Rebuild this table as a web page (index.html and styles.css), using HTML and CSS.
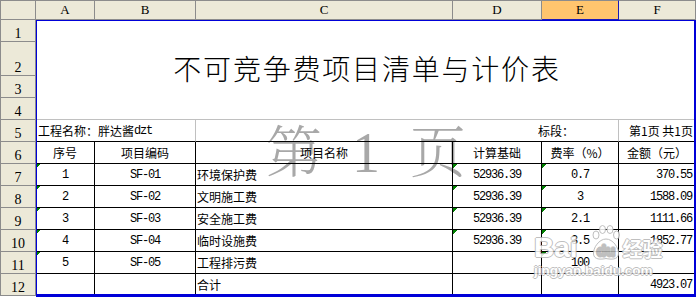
FILE: index.html
```html
<!DOCTYPE html>
<html lang="zh-CN">
<head>
<meta charset="utf-8">
<title>不可竞争费项目清单与计价表</title>
<link rel="stylesheet" href="styles.css">
</head>
<body>
<div class="sheet">
  <div class="corner"></div>
  <div class="ch">A</div>
  <div class="ch">B</div>
  <div class="ch">C</div>
  <div class="ch">D</div>
  <div class="ch ch-active">E</div>
  <div class="ch">F</div>

  <div class="title">不可竞争费项目清单与计价表</div>
  <div class="rh">1</div>
  <div class="rh">2</div>
  <div class="rh">3</div>
  <div class="rh">4</div>

  <div class="rh">5</div>
  <div class="c info span2 sep-r pad-a">工程名称：胖达酱<span class="num">dzt</span></div>
  <div class="c info"></div>
  <div class="c info span2 sep-r label">标段：</div>
  <div class="c info right">第1页 共1页</div>

  <div class="rh">6</div>
  <div class="c g center">序号</div>
  <div class="c g center">项目编码</div>
  <div class="c g center">项目名称</div>
  <div class="c g center">计算基础</div>
  <div class="c g center">费率（%）</div>
  <div class="c g center">金额（元）</div>

  <div class="rh">7</div>
  <div class="c g center tri"><span class="num">1</span></div>
  <div class="c g center"><span class="num">SF-01</span></div>
  <div class="c g">环境保护费</div>
  <div class="c g center tri"><span class="num">52936.39</span></div>
  <div class="c g center tri"><span class="num">0.7</span></div>
  <div class="c g right"><span class="num">370.55</span></div>

  <div class="rh">8</div>
  <div class="c g center tri"><span class="num">2</span></div>
  <div class="c g center"><span class="num">SF-02</span></div>
  <div class="c g">文明施工费</div>
  <div class="c g center tri"><span class="num">52936.39</span></div>
  <div class="c g center tri"><span class="num">3</span></div>
  <div class="c g right"><span class="num">1588.09</span></div>

  <div class="rh">9</div>
  <div class="c g center tri"><span class="num">3</span></div>
  <div class="c g center"><span class="num">SF-03</span></div>
  <div class="c g">安全施工费</div>
  <div class="c g center tri"><span class="num">52936.39</span></div>
  <div class="c g center tri"><span class="num">2.1</span></div>
  <div class="c g right"><span class="num">1111.66</span></div>

  <div class="rh">10</div>
  <div class="c g center tri"><span class="num">4</span></div>
  <div class="c g center"><span class="num">SF-04</span></div>
  <div class="c g">临时设施费</div>
  <div class="c g center tri"><span class="num">52936.39</span></div>
  <div class="c g center tri"><span class="num">3.5</span></div>
  <div class="c g right"><span class="num">1852.77</span></div>

  <div class="rh">11</div>
  <div class="c g center tri"><span class="num">5</span></div>
  <div class="c g center"><span class="num">SF-05</span></div>
  <div class="c g">工程排污费</div>
  <div class="c g"></div>
  <div class="c g center tri"><span class="num">100</span></div>
  <div class="c g"></div>

  <div class="rh">12</div>
  <div class="c g"></div>
  <div class="c g"></div>
  <div class="c g">合计</div>
  <div class="c g"></div>
  <div class="c g"></div>
  <div class="c g right"><span class="num">4923.07</span></div>

  <div class="wm"><span>第</span><span class="wm-num">1</span><span>页</span></div>

  <div class="sel"></div>

  <div class="bd">
    <div class="bd-top"><span class="bd-bai">Bai</span><svg class="bd-paw" width="30" height="36" viewBox="0 0 30 36"><g fill="#fff" stroke="#b4b4b4" stroke-width="1"><ellipse cx="5" cy="10" rx="3" ry="4"/><ellipse cx="11.5" cy="4.5" rx="3" ry="4"/><ellipse cx="19" cy="4.5" rx="3" ry="4"/><ellipse cx="25.5" cy="10" rx="3" ry="4"/><path d="M15 14 C8 14 2 23 2.5 29 C3 35 10 34.5 15 33.5 C20 34.5 27 35 27.5 29 C28 23 22 14 15 14Z"/></g><text x="15" y="31" text-anchor="middle" font-family="Liberation Sans" font-weight="bold" font-size="15" fill="#fff" stroke="#b4b4b4" stroke-width="0.8">du</text></svg><span class="bd-jy">经验</span></div>
    <div class="bd-url">jingyan.baidu.com</div>
  </div>
</div>
</body>
</html>
```
FILE: styles.css
```css
* {
  box-sizing: border-box;
  margin: 0;
  padding: 0;
}

html,
body {
  width: 696px;
  height: 297px;
  overflow: hidden;
  background: #fff;
}

.sheet {
  position: relative;
  z-index: 0;
  display: grid;
  grid-template-columns: 36px 59px 101px 257px 89px 77px 77px;
  grid-template-rows: 20px 22px 34px 22px 22px repeat(8, 22px);
  font-family: "Noto Sans CJK SC", sans-serif;
  font-size: 12px;
  color: #000;
}

/* headers */
.corner,
.ch,
.rh {
  background: #ece9d8;
  border: 0 solid #8c8c8c;
}

.corner {
  border-width: 1px;
}

.ch {
  border-top-width: 1px;
  border-right-width: 1px;
  border-bottom-width: 1px;
  display: flex;
  align-items: center;
  justify-content: center;
  font: 13px/14px "Liberation Serif", serif;
}

.ch-active {
  background: #ffc56e;
  border-right-color: #1a1ab8;
  border-bottom-color: #1a1ab8;
}

.rh {
  border-left-width: 1px;
  border-right-width: 1px;
  border-bottom-width: 1px;
  display: flex;
  align-items: flex-end;
  justify-content: center;
  font: 14px/14px "Liberation Serif", serif;
}

/* title block */
.title {
  grid-column: 2 / 8;
  grid-row: 2 / 6;
  border-bottom: 1px solid #c0c0c0;
  text-align: center;
  padding-top: 33px;
  padding-left: 2px;
  font-size: 28px;
  line-height: 30px;
  letter-spacing: 1.8px;
  font-weight: 300;
}

/* cells */
.c {
  display: flex;
  align-items: center;
  padding: 0 1px;
  white-space: nowrap;
}

.g {
  border-right: 1px solid #000;
  border-bottom: 1px solid #000;
}

.info {
  border-bottom: 1px solid #000;
}

.span2 {
  grid-column: span 2;
}

.sep-r {
  border-right: 1px solid #c0c0c0;
}

.pad-a {
  padding-left: 2px;
}

.label {
  padding-left: 85px;
}

.center {
  justify-content: center;
}

.right {
  justify-content: flex-end;
  padding-right: 3px;
}

.num {
  font-family: "Liberation Mono", monospace;
  font-size: 12px;
  letter-spacing: -1.2px;
}

.tri {
  background: linear-gradient(135deg, #008000 0 3px, transparent 3px) no-repeat 0 0 / 6px 6px;
}

/* page watermark (behind cells) */
.wm {
  position: absolute;
  z-index: -1;
  left: 36px;
  width: 660px;
  top: 120px;
  display: flex;
  justify-content: center;
  align-items: baseline;
  gap: 30px;
  font-family: "Noto Serif CJK SC", "Noto Sans CJK SC", serif;
  font-weight: 300;
  font-size: 56px;
  line-height: 56px;
  color: #a8a8a8;
}

.wm-num {
  font-family: "Liberation Serif", serif;
}

/* selection outline */
.sel {
  position: absolute;
  left: 36px;
  top: 20px;
  width: 660px;
  height: 277px;
  border: solid #0000d8;
  border-width: 1px 2px 3px 1px;
  pointer-events: none;
}

/* baidu watermark (over cells) */
.bd {
  position: absolute;
  z-index: 2;
  left: 534px;
  top: 234px;
  opacity: 0.85;
  color: #fff;
  font: bold 28px/28px "Liberation Sans", sans-serif;
  text-shadow: 1px 0 #b4b4b4, -1px 0 #b4b4b4, 0 1px #b4b4b4, 0 -1px #b4b4b4;
}

.bd-top {
  height: 28px;
  line-height: 28px;
  white-space: nowrap;
}

.bd-bai {
  vertical-align: baseline;
}

.bd-paw {
  margin: -10px 0 0 13px;
  vertical-align: -4px;
}

.bd-jy {
  margin-left: 2px;
  font: bold 20px/20px "Noto Sans CJK SC", sans-serif;
}

.bd-url {
  margin-top: 2px;
  font: bold 13.5px/14px "Liberation Sans", sans-serif;
}
```
